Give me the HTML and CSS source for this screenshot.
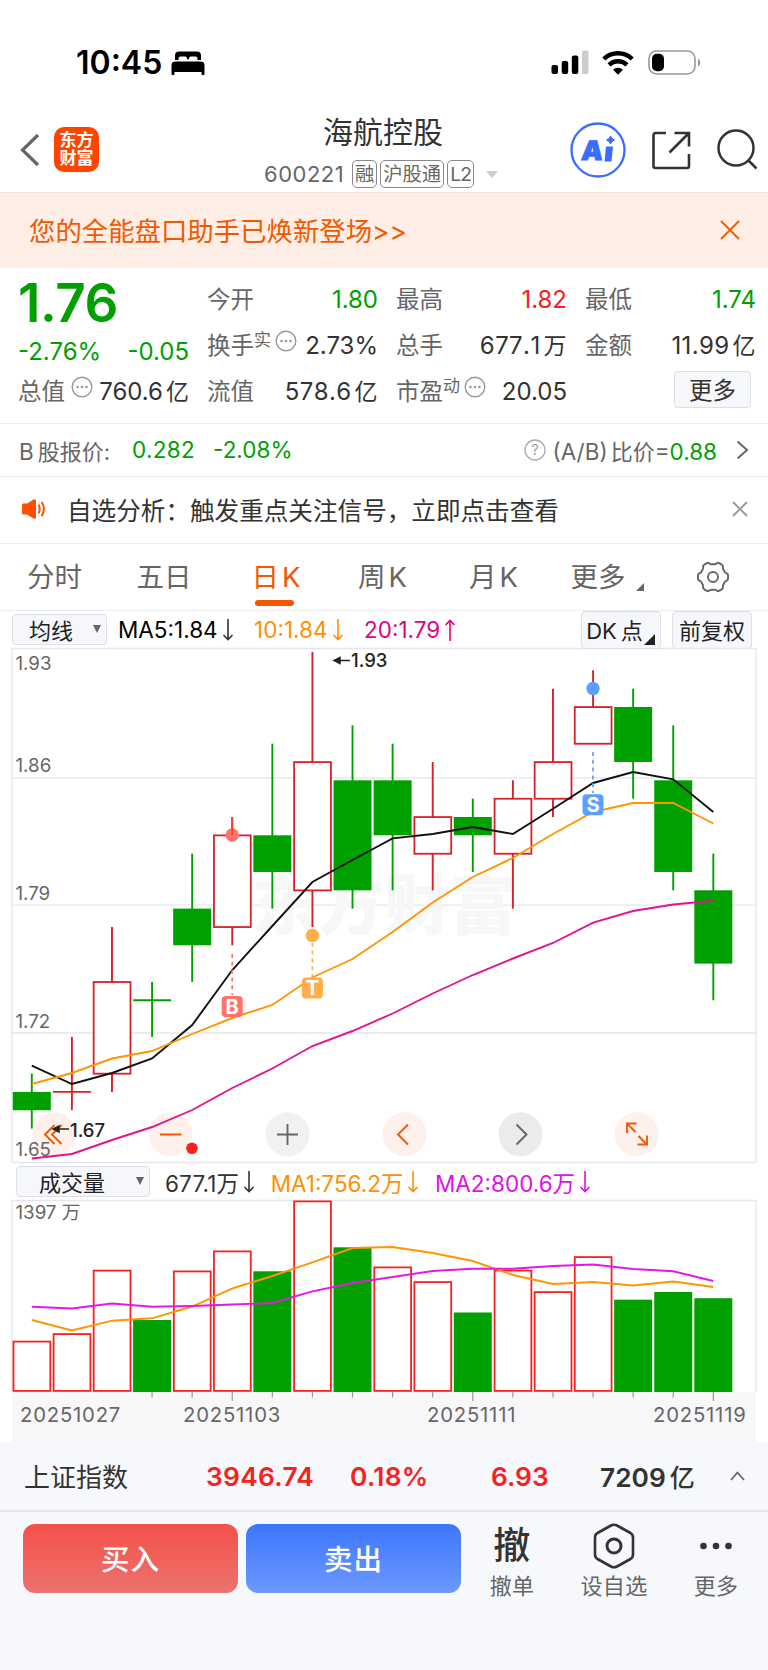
FILE: index.html
```html
<!DOCTYPE html>
<html lang="zh-CN">
<head>
    <meta charset="UTF-8">
    <meta name="viewport" content="width=device-width, initial-scale=1.0">
    <title>海航控股 600221</title>
    <link rel="stylesheet" href="styles.css">
</head>
<body>

    <div class="status">
        <span class="time">10:45</span>
        <svg class="bed" width="34" height="24" viewBox="0 0 34 24">
            <path d="M4 9V4.500a4 4 0 0 1 4-4H26a4 4 0 0 1 4 4V9H26.500V7.500a2 2 0 0 0-2-2H20a2 2 0 0 0-2 2L17 9l-1-1.500a2 2 0 0 0-2-2H9.500a2 2 0 0 0-2 2V9z"/>
            <path d="M0.500 23V14.500a4 4 0 0 1 4-4h25a4 4 0 0 1 4 4V23a1 1 0 0 1-1 1h-1a1 1 0 0 1-1-1V21H3.500V23a1 1 0 0 1-1 1h-1a1 1 0 0 1-1-1z"/>
        </svg>
        <div class="status-right">
            <svg width="38" height="25" viewBox="0 0 38 25">
                <rect x="0.500" y="15" width="6.500" height="9" rx="2"/>
                <rect x="10.700" y="11" width="6.500" height="13" rx="2"/>
                <rect x="20.800" y="5.500" width="6.500" height="18.500" rx="2"/>
                <rect x="31" y="0.500" width="6.500" height="23.500" rx="2" fill="#ccc"/>
            </svg>
            <svg class="wifi" width="32" height="24" viewBox="0 0 32 24">
                <path d="M1.800 8a20.500 20.500 0 0 1 28.400 0M7 13.900a13 13 0 0 1 18 0" fill="none" stroke="#000" stroke-width="4.400"/>
                <path d="M16 23.800l-5-5a7.300 7.300 0 0 1 10 0z"/>
            </svg>
            <svg width="53" height="25" viewBox="0 0 53 25">
                <rect x="1" y="1" width="46" height="23" rx="7.500" fill="none" stroke="#999" stroke-width="1.600"/>
                <rect x="4" y="3.800" width="12" height="17.500" rx="5"/>
                <path d="M50 8.500c3 1.500 3 6.500 0 8z" fill="#999"/>
            </svg>
        </div>
    </div>

    <div class="header">
        <div class="header-left">
            <svg width="20" height="34" viewBox="0 0 20 34"><path d="M18 2L2.500 17 18 32" fill="none" stroke="#666" stroke-width="3.200"/></svg>
            <div class="logo">东方<br>财富</div>
        </div>
        <div class="header-title">
            <h1>海航控股</h1>
            <div class="sub">
                <span class="code">600221</span>
                <span class="tag">融</span>
                <span class="tag">沪股通</span>
                <span class="tag tag-l2">L2</span>
                <span class="caret"></span>
            </div>
        </div>
        <div class="header-right">
            <svg width="56" height="56" viewBox="0 0 56 56">
                <circle cx="28" cy="28" r="26.500" fill="none" stroke="#3b6cff" stroke-width="2.300"/>
                <text x="14" y="38" class="ai" transform="skewX(-5)">A</text>
                <path d="M36 24.500h7l-1.500 15h-7z" fill="#3b6cff"/>
                <path d="M40.500 14q1 3 4 4-3 1-4 4-1-3-4-4 3-1 4-4z" fill="#3b6cff" stroke="#3b6cff"/>
            </svg>
            <svg class="share" width="40" height="40" viewBox="0 0 40 40" fill="none" stroke="#333" stroke-width="2.600">
                <path d="M15 3H4.500A2 2 0 0 0 2.500 5V36a2 2 0 0 0 2 2H36a2 2 0 0 0 2-2V24M23.500 3H38V16.500M38 3L18.500 22.500"/>
            </svg>
            <svg class="search" width="41" height="41" viewBox="0 0 41 41" fill="none" stroke="#333" stroke-width="2.500">
                <circle cx="19" cy="19" r="17.500"/><path d="M31 31l8.500 8.500"/>
            </svg>
        </div>
    </div>

    <div class="banner">
        <span>您的全能盘口助手已焕新登场&gt;&gt;</span>
        <svg width="20" height="20" viewBox="0 0 20 20"><path d="M1 1l18 18M19 1L1 19" stroke="#f35800" stroke-width="1.800"/></svg>
    </div>

    <div class="quote">
        <div class="col">
            <div class="price">1.76</div>
            <div class="cell change green"><span>-2.76%</span><span>-0.05</span></div>
            <div class="cell"><label>总值</label><svg class="dots up" width="22" height="22" viewBox="0 0 22 22"><use href="#more"/></svg><b>760.6<i>亿</i></b></div>
        </div>
        <div class="col">
            <div class="cell"><label>今开</label><b class="green">1.80</b></div>
            <div class="cell"><label>换手<sup>实</sup></label><svg class="dots" width="22" height="22" viewBox="0 0 22 22"><use href="#more"/></svg><b>2.73%</b></div>
            <div class="cell"><label>流值</label><b class="wide">578.6<i>亿</i></b></div>
        </div>
        <div class="col">
            <div class="cell"><label>最高</label><b class="red">1.82</b></div>
            <div class="cell"><label>总手</label><b class="wide">677.1<i>万</i></b></div>
            <div class="cell"><label>市盈<sup>动</sup></label><svg class="dots" width="22" height="22" viewBox="0 0 22 22"><use href="#more"/></svg><b>20.05</b></div>
        </div>
        <div class="col">
            <div class="cell"><label>最低</label><b class="green">1.74</b></div>
            <div class="cell"><label>金额</label><b class="wide">11.99<i>亿</i></b></div>
            <button class="more-btn">更多</button>
        </div>
    </div>

    <div class="bshare">
        <span>B<i>股报价:</i></span>
        <span class="green b-price">0.282</span>
        <span class="green b-pct">-2.08%</span>
        <div class="ratio">
            <svg width="22" height="22" viewBox="0 0 22 22"><circle cx="11" cy="11" r="10" fill="none" stroke="#aaa" stroke-width="1.300"/><text x="11" y="16" class="q">?</text></svg>
            <span>(A/B)<i>比价</i>=<em class="green">0.88</em></span>
            <svg class="arrow" width="13" height="20" viewBox="0 0 13 20"><path d="M1.500 1.500l9.500 8.500-9.500 8.500" fill="none" stroke="#666" stroke-width="2"/></svg>
        </div>
    </div>

    <div class="notice">
        <svg width="26" height="22" viewBox="0 0 26 22">
            <path d="M1 7Q1 5.500 2.500 5.500H6L12.500 1.500Q15 0.500 15 2.500V19.500Q15 21.500 12.500 20.500L6 16.500H2.500Q1 16.500 1 15z" fill="#ff5000"/>
            <path d="M17.500 6.500q2.500 4.500 0 9M20.500 4q5 7 0 14" fill="none" stroke="#ff5000" stroke-width="2"/>
        </svg>
        <span>自选分析：触发重点关注信号，立即点击查看</span>
        <svg class="close" width="16" height="16" viewBox="0 0 16 16"><path d="M1 1l14 14M15 1L1 15" stroke="#999" stroke-width="1.900"/></svg>
    </div>

    <div class="tabs">
        <span>分时</span>
        <span>五日</span>
        <span class="active">日<i>K</i></span>
        <span>周<i>K</i></span>
        <span>月<i>K</i></span>
        <span class="tab-more">更多</span>
        <svg width="32" height="32" viewBox="-16 -16 32 32" fill="none" stroke="#666" stroke-width="1.900" stroke-linejoin="round">
            <path d="M14.700 2.900L11.900 4.800 10.100 7.900 9.800 11.300Q8 13.500 4.900 14.200L1.800 12.700H-1.800L-4.900 14.200Q-8 13.500-9.800 11.300L-10.100 7.900-11.900 4.800-14.700 2.900Q-15.500 0-14.700-2.900L-11.900-4.800-10.100-7.900-9.800-11.300Q-8-13.500-4.900-14.200L-1.800-12.700H1.800L4.900-14.200Q8-13.500 9.800-11.300L10.100-7.900 11.900-4.800 14.700-2.900Q15.500 0 14.700 2.900z"/>
            <circle r="5"/>
        </svg>
    </div>

    <div class="ctrl">
        <div class="select">均线<span class="tri"></span></div>
        <span class="ma5">MA5:1.84</span><svg class="ar"><use href="#down"/></svg>
        <span class="ma10">10:1.84</span><svg class="ar ma10"><use href="#down"/></svg>
        <span class="ma20">20:1.79</span><svg class="ar ma20"><use href="#up"/></svg>
        <button class="dk">DK<i>点</i></button>
        <button class="fq">前复权</button>
    </div>

    <svg id="kline" class="chart" width="768" height="514" viewBox="0 0 768 514"></svg>

    <div class="ctrl vol-ctrl">
        <div class="select">成交量<span class="tri"></span></div>
        <span class="vol">677.1万</span><svg class="ar vol"><use href="#down"/></svg>
        <span class="ma10">MA1:756.2万</span><svg class="ar ma10"><use href="#down"/></svg>
        <span class="vma2">MA2:800.6万</span><svg class="ar vma2"><use href="#down"/></svg>
    </div>

    <svg id="volume" class="chart" width="768" height="242" viewBox="0 0 768 242"></svg>

    <div class="index">
        <span class="index-name">上证指数</span>
        <span class="red n1">3946.74</span>
        <span class="red n2">0.18%</span>
        <span class="red n3">6.93</span>
        <span class="n4">7209<i>亿</i></span>
        <svg width="15" height="10" viewBox="0 0 15 10"><path d="M1 9l6.500-7.500L14 9" fill="none" stroke="#666" stroke-width="1.800"/></svg>
    </div>

    <div class="footer">
        <button class="buy">买入</button>
        <button class="sell">卖出</button>
        <div class="act">
            <div class="ico che">撤</div>
            <span>撤单</span>
        </div>
        <div class="act">
            <div class="ico">
                <svg width="42" height="46" viewBox="0 0 42 46" fill="none" stroke="#333" stroke-width="2.600">
                    <path d="M18 2.500Q21 1 24 2.500L37.500 10Q40 11.500 40 14.500V31.500Q40 34.500 37.500 36L24 43.500Q21 45 18 43.500L4.500 36Q2 34.500 2 31.500V14.500Q2 11.500 4.500 10z"/>
                    <circle cx="21" cy="23" r="7" stroke-width="3"/>
                </svg>
            </div>
            <span>设自选</span>
        </div>
        <div class="act">
            <div class="ico">
                <svg width="34" height="8" viewBox="0 0 34 8" fill="#333"><circle cx="4.500" cy="4" r="3.300"/><circle cx="17" cy="4" r="3.300"/><circle cx="29.500" cy="4" r="3.300"/></svg>
            </div>
            <span>更多</span>
        </div>
    </div>

    <!-- shared symbols -->
    <svg class="defs" width="0" height="0">
        <symbol id="more" viewBox="0 0 22 22">
            <circle cx="11" cy="11" r="9.800" fill="none" stroke="#999" stroke-width="1.400"/>
            <circle cx="6.500" cy="11" r="1.300" fill="#999"/><circle cx="11" cy="11" r="1.300" fill="#999"/><circle cx="15.500" cy="11" r="1.300" fill="#999"/>
        </symbol>
        <symbol id="down" viewBox="0 0 12 22"><path d="M6 0V20.500M1.500 16L6 20.500 10.500 16" fill="none" stroke="currentColor" stroke-width="1.600"/></symbol>
        <symbol id="up" viewBox="0 0 12 22"><path d="M6 22V1.500M1.500 6L6 1.500 10.500 6" fill="none" stroke="currentColor" stroke-width="1.600"/></symbol>
    </svg>

    <script src="script.js"></script>
</body>
</html>
```
FILE: styles.css
```css
* {
    box-sizing: border-box;
}
body {
    margin: 0;
    width: 768px;
    height: 1670px;
    overflow: hidden;
    background: #fff;
    color: #333;
    font-family: Inter, "Noto Sans CJK SC", sans-serif;
    font-size: 24px;
}
i, em, b {
    font-style: normal;
    font-weight: inherit;
}
svg {
    display: block;
    flex: none;
}
span {
    white-space: nowrap;
}
button {
    font-family: inherit;
    color: inherit;
    padding: 0;
}
.green {
    color: #00a000;
}
.red {
    color: #f82020;
}
.defs {
    position: absolute;
}

/* status bar */
.status {
    height: 108px;
    padding: 17px 67px 0 76px;
    display: flex;
    align-items: center;
    color: #000;
}
.time {
    font-size: 32px;
    font-weight: 600;
    width: 95px;
}
.status-right {
    margin-left: auto;
    display: flex;
    align-items: center;
}
.wifi {
    margin: 0 14px 0 13px;
}

/* header */
.header {
    height: 84px;
    display: grid;
    grid-template-columns: 264px 240px 264px;
}
.header-left {
    display: flex;
    align-items: center;
    padding-left: 20px;
}
.logo {
    width: 45px;
    height: 45px;
    margin: -2px 0 0 14px;
    padding-top: 4px;
    border-radius: 10px;
    background: #ff4400;
    color: #fff;
    font-size: 17px;
    font-weight: 700;
    line-height: 18.500px;
    text-align: center;
}
h1 {
    margin: 7px 0 0;
    padding-right: 2px;
    font-size: 30px;
    font-weight: 400;
    line-height: 34px;
    text-align: center;
}
.sub {
    display: flex;
    align-items: center;
    height: 28px;
    margin-top: 11px;
    color: #666;
}
.code {
    width: 88px;
    font-size: 22px;
    letter-spacing: 0.500px;
}
.tag {
    height: 28px;
    margin-right: 3px;
    padding: 0 2px;
    border: 1px solid #888;
    border-radius: 5px;
    font-size: 19.300px;
    line-height: 26px;
}
.tag-l2 {
    letter-spacing: -0.800px;
}
.caret {
    margin-left: 9px;
    border: 6.500px solid transparent;
    border-top: 7px solid #ccc;
    border-bottom: 0;
}
.header-right {
    display: flex;
    align-items: center;
    padding-left: 66px;
}
.header-right svg {
    margin-top: -1px;
}
.ai {
    font-size: 27px;
    font-weight: 900;
    fill: #3b6cff;
    stroke: #3b6cff;
    stroke-width: 1px;
}
.header-right .share {
    margin-left: 25px;
}
.header-right .search {
    margin-left: 26px;
}

/* banner */
.banner {
    height: 76px;
    padding: 0 28px 2px 29px;
    display: flex;
    align-items: center;
    justify-content: space-between;
    border-top: 1px solid #ebe6e4;
    background: #feeee6;
    color: #f35800;
    font-size: 26.400px;
}

/* quote */
.quote {
    height: 156px;
    padding: 9px 12px 0 18px;
    display: grid;
    grid-template-columns: repeat(4, 171px);
    column-gap: 18px;
    border-bottom: 1px solid #eee;
}
.price {
    height: 52px;
    line-height: 53px;
    font-size: 53px;
    font-weight: 600;
    letter-spacing: -0.500px;
    color: #00a000;
}
.cell {
    height: 46px;
    line-height: 46px;
    display: flex;
    justify-content: space-between;
    position: relative;
}
.cell.change {
    height: 40px;
}
.cell label {
    color: #666;
    font-size: 23.500px;
    width: 49px;
    white-space: nowrap;
}
.cell sup {
    font-size: 17px;
    line-height: 0;
    vertical-align: 8px;
}
.cell i {
    margin-left: 3px;
    font-size: 23px;
}
.wide {
    font-kerning: none;
    letter-spacing: 0.400px;
}
.dots {
    position: absolute;
    left: 68px;
    top: 7px;
}
.dots.up {
    left: 53px;
}
.more-btn {
    display: block;
    width: 77px;
    height: 37px;
    margin: 2px 0 0 89px;
    padding-bottom: 2px;
    border: 1px solid #dcdfe8;
    border-radius: 4px;
    background: #f6f7fa;
    font-size: 23.500px;
}

/* B share */
.bshare {
    height: 53px;
    padding: 0 19px 1px;
    display: flex;
    align-items: center;
    border-bottom: 1px solid #eee;
    color: #666;
    font-size: 22.500px;
}
.bshare i {
    margin-left: 4px;
    font-size: 22px;
}
.b-price {
    margin-left: 22px;
    letter-spacing: 0.300px;
}
.b-pct {
    margin-left: 18px;
}
.ratio {
    margin-left: auto;
    display: flex;
    align-items: center;
    gap: 6px;
}
.ratio i {
    margin-left: 3px;
}
.arrow {
    margin-left: 13px;
}
.q {
    font-size: 14px;
    fill: #999;
    text-anchor: middle;
}

/* notice */
.notice {
    height: 67px;
    padding: 0 20px 2px 21px;
    display: flex;
    align-items: center;
    border-bottom: 1px solid #eee;
    font-size: 24.600px;
}
.notice span {
    margin-left: 20px;
}
.close {
    margin-left: auto;
}

/* tabs */
.tabs {
    height: 67px;
    padding: 0 39px 0 27px;
    display: grid;
    grid-template-columns: 109.500px 115px 106.500px 111px 101.500px 1fr;
    grid-auto-flow: column;
    align-items: center;
    border-bottom: 1px solid #eee;
    color: #666;
    font-size: 27.500px;
}
.tabs span {
    line-height: 66px;
    position: relative;
}
.tabs i {
    margin-left: 3px;
}
.tabs .active {
    color: #f35800;
}
.active::after {
    content: "";
    position: absolute;
    left: 3.500px;
    bottom: 4.500px;
    width: 38.500px;
    height: 6px;
    border-radius: 3px;
    background: #f35800;
}
.tab-more::after {
    content: "";
    position: absolute;
    left: 65px;
    bottom: 19px;
    border-left: 8px solid transparent;
    border-bottom: 8px solid #666;
}

/* indicator rows */
.ctrl {
    height: 37px;
    padding-left: 12px;
    display: flex;
    align-items: center;
    font-size: 22.500px;
}
.select {
    width: 95px;
    height: 31px;
    margin-right: 11px;
    padding: 0 5px 2px 16px;
    display: flex;
    align-items: center;
    justify-content: space-between;
    border: 1px solid #dcdfe8;
    border-radius: 4px;
    background: #f6f7fa;
    color: #222;
    font-size: 22px;
}
.tri {
    border: 4.500px solid transparent;
    border-top: 8px solid #666;
    border-bottom: 0;
}
.ar {
    width: 12px;
    height: 22px;
    margin-left: 4px;
}
.ma5 {
    color: #000;
}
.ma10 {
    color: #ff9000;
}
.ma20 {
    color: #e4007f;
}
.vma2 {
    color: #e010e8;
}
span.ma10, span.ma20 {
    margin-left: 20.500px;
}
.dk, .fq {
    height: 38px;
    padding-bottom: 2px;
    border: 1px solid #dcdfe8;
    border-radius: 4px;
    background: #f6f7fa;
    color: #222;
    font-size: 22px;
}
.dk {
    position: relative;
    width: 80px;
    margin-left: auto;
    padding-right: 13px;
}
.dk i {
    margin-left: 4px;
}
.dk::after {
    content: "";
    position: absolute;
    right: 5px;
    bottom: 3px;
    border-left: 11px solid transparent;
    border-bottom: 11px solid #222;
}
.fq {
    width: 80px;
    margin: 0 16px 0 11px;
}
.vol-ctrl {
    height: 38px;
    padding: 1px 0 0 16px;
}
.vol-ctrl .select {
    width: 134px;
    margin-right: 15px;
    padding: 0 5px 2px 22px;
}
.vol-ctrl span.ma10, .vol-ctrl span.vma2 {
    margin-left: 15.500px;
}
.vol {
    letter-spacing: 0.150px;
}

/* charts */
.chart {
    overflow: visible;
}
.chart .grid {
    fill: none;
    stroke: #e4e6ec;
    stroke-width: 1.300;
}
.chart .line {
    fill: none;
    stroke-width: 1.900;
}
.chart .axis {
    font-size: 18.700px;
    fill: #666;
}
.chart .date {
    font-size: 20.300px;
    font-kerning: none;
    letter-spacing: 0.800px;
    fill: #666;
}
.chart .mark {
    font-size: 18.500px;
    font-weight: 500;
    fill: #222;
}
.chart .badge {
    font-size: 20px;
    font-weight: 700;
    fill: #fff;
    text-anchor: middle;
}
.chart .watermark {
    font-size: 66px;
    font-weight: 900;
    fill: #f7f7f7;
}

/* index */
.index {
    height: 70px;
    padding: 0 23px 0 24px;
    display: flex;
    align-items: center;
    border-bottom: 2px solid #e4e6e8;
    background: #f7f8fb;
    font-size: 26.300px;
    font-weight: 600;
}
.index-name {
    width: 182px;
    padding-bottom: 2px;
    font-size: 26px;
    font-weight: 400;
}
.n1 {
    width: 144px;
    letter-spacing: 0.300px;
}
.n2 {
    width: 141px;
    letter-spacing: 0.300px;
}
.n3 {
    width: 109px;
}
.n4 i {
    margin-left: 4px;
    font-size: 25px;
    font-weight: 500;
}
.index svg {
    margin-left: auto;
}

/* footer */
.footer {
    height: 158px;
    padding: 12px 0 0 23px;
    display: flex;
    align-items: flex-start;
    background: #f7f8fb;
}
.buy, .sell {
    width: 215px;
    height: 69px;
    margin-right: 8px;
    padding-bottom: 3px;
    border: 0;
    border-radius: 12px;
    color: #fff;
    font-size: 28.500px;
    font-weight: 500;
    letter-spacing: 1px;
}
.buy {
    background: linear-gradient(#f4504a, #ec736e);
}
.sell {
    margin-right: 0;
    background: linear-gradient(#3b76fb, #6d99ff);
}
.act {
    width: 102px;
    display: flex;
    flex-direction: column;
    align-items: center;
    color: #666;
    font-size: 22px;
    letter-spacing: 0.300px;
    line-height: 36px;
}
.ico {
    height: 44px;
    display: flex;
    align-items: center;
}
.che {
    color: #333;
    font-size: 37px;
    font-weight: 500;
}
```
FILE: script.js
```javascript
// open, close, high, low
const days = [
    [1.69, 1.68, 1.70, 1.67],
    [1.69, 1.69, 1.72, 1.68],
    [1.70, 1.75, 1.78, 1.69],
    [1.74, 1.74, 1.75, 1.72],
    [1.79, 1.77, 1.82, 1.75],
    [1.78, 1.83, 1.84, 1.77],
    [1.83, 1.81, 1.88, 1.79],
    [1.80, 1.87, 1.93, 1.78],
    [1.86, 1.80, 1.89, 1.79],
    [1.86, 1.83, 1.88, 1.80],
    [1.82, 1.84, 1.87, 1.80],
    [1.84, 1.83, 1.85, 1.81],
    [1.82, 1.85, 1.86, 1.79],
    [1.85, 1.87, 1.91, 1.84],
    [1.88, 1.90, 1.92, 1.88],
    [1.90, 1.87, 1.91, 1.85],
    [1.86, 1.81, 1.89, 1.80],
    [1.80, 1.76, 1.82, 1.74]
];
const up = [0, 1, 1, 0, 0, 1, 0, 1, 0, 0, 1, 0, 1, 1, 1, 0, 0, 0];
const volUp = [1, 1, 1, 0, 1, 1, 0, 1, 0, 1, 1, 0, 1, 1, 1, 0, 0, 0];
const GREEN = '#00a000';

const cx = i => 31.8 + i * 40.09;
const py = p => 4 + (1.93 - p) * 1833;

function polyline(ys, color) {
    const pts = ys.map((y, i) => cx(i).toFixed(1) + ',' + y).join(' ');
    return `<polyline class="line" points="${pts}" stroke="${color}"/>`;
}

function box(x, top, bottom, red, color) {
    if (red) {
        return `<rect x="${x - 18.3}" y="${top + 0.1}" width="36.800" height="${bottom - top}" fill="#fff" stroke="${color}" stroke-width="1.800"/>`;
    }
    return `<rect x="${x - 19}" y="${top}" width="38" height="${bottom - top}" fill="${GREEN}"/>`;
}

function drawKline() {
    let s = '<path class="grid" d="M12 0.500H756M12 129.900H756M12 257.200H756M12 385H756M12 514.500H756M12 0V515M756 0V515"/>';
    s += '<text class="watermark" x="252" y="281">东方财富</text>';

    // round buttons
    const btns = [[54.5, '#fef0ea'], [170.5, '#fef0ea'], [287.5, '#f1f1f1'], [404.5, '#fef0ea'], [520.5, '#ebebeb'], [636.5, '#fef0ea']];
    btns.forEach(b => s += `<circle cx="${b[0]}" cy="486.300" r="22" fill="${b[1]}"/>`);
    s += `<g fill="none" stroke="#f35800" stroke-width="1.900">
        <path d="M54.500 477l-9.500 9.500 9.500 9.500M61.500 477l-9.500 9.500 9.500 9.500M160 486.500h21.500M408 476.500l-10 10 10 10"/>
        <path d="M627 485V475.500h9.500M627 475.500l8.500 8.500M647 487.500V496.500h-9.500M647 496.500l-8.500-8.500"/></g>
        <path d="M277 486.500h21M287.500 476v21M516.500 476.500l10 10-10 10" fill="none" stroke="#666" stroke-width="1.900"/>`;

    days.forEach((d, i) => {
        const x = cx(i), color = up[i] ? '#d82028' : GREEN;
        const top = py(Math.max(d[0], d[1])), bottom = py(Math.min(d[0], d[1]));
        s += `<path d="M${x} ${py(d[2])}V${py(d[3])}" stroke="${color}" stroke-width="1.900"/>`;
        if (d[0] === d[1]) {
            s += `<path d="M${x - 19} ${top}h38" stroke="${color}" stroke-width="1.900"/>`;
        } else {
            s += box(x, top, bottom, up[i], color);
        }
    });

    [['1.93', 22], ['1.86', 123.5], ['1.79', 251.5], ['1.72', 380], ['1.65', 508]].forEach(t =>
        s += `<text class="axis" x="15.500" y="${t[1]}">${t[0]}</text>`);

    s += polyline([417.7, 436, 425, 410.5, 377, 322, 278, 234, 212, 190.3, 186, 179, 186, 160.7, 135, 124, 131.3, 164], '#111');
    s += polyline([436, 425, 410.5, 403, 386, 370, 357, 329.5, 311, 284, 254.5, 229, 210, 186, 164, 155, 155, 175.5], '#ff9500');
    s += polyline([510.5, 506, 492, 479, 462, 440, 420.5, 398, 383, 365.5, 345.5, 327, 310.5, 295, 274.7, 263, 256.5, 252.7], '#e4148a');

    // buy / sell marks
    [[232.2, 187, 306, 347, 358.5, '#ff7468', 'B'], [312.4, 287.5, 287, 329, 340, '#ffae4a', 'T'], [593, 40.5, 104, 145, 156.8, '#5b9fff', 'S']].forEach(m => {
        s += `<circle cx="${m[0]}" cy="${m[1]}" r="6.700" fill="${m[5]}"/>
            <path d="M${m[0]} ${m[2]}V${m[3]}" stroke="${m[5]}" stroke-width="1.700" stroke-dasharray="4 3.800"/>
            <rect x="${m[0] - 10.5}" y="${m[4] - 10.5}" width="21" height="21" rx="4" fill="${m[5]}"/>
            <text class="badge" x="${m[0]}" y="${m[4] + 7.3}">${m[6]}</text>`;
    });
    s += '<path d="M232.200 169V187" stroke="#f04030" stroke-width="1.700"/>';

    s += `<g stroke="#222" stroke-width="1.500" fill="#222">
        <path d="M336 12.500h14M340 9.500v6l-6-3zM56 481h13M59 478v6l-6-3z"/></g>
        <text class="mark" x="351" y="19.300">1.93</text>
        <text class="mark" x="70" y="489">1.67</text>
        <circle cx="192" cy="500.300" r="5.800" fill="#f82020"/>`;
    document.getElementById('kline').innerHTML = s;
}

function drawVolume() {
    const tops = [141.5, 134, 70.5, 120, 71.3, 51.3, 71.3, 1.3, 47.3, 67.3, 82, 112.5, 70.5, 92, 57, 99.7, 92, 98.2];
    let s = '<rect x="12" y="192" width="744" height="50" fill="#f7f7fa"/>';
    s += '<path class="grid" d="M12 192V0.500H756V192"/>';
    tops.forEach((t, i) => {
        s += volUp[i] ? box(cx(i), t, 190.8, true, '#f82020') : box(cx(i), t, 192, false);
        if (i > 2) {
            s += `<path d="M${cx(i)} 192v${i % 6 === 5 ? 9 : 5.5}" stroke="#999" stroke-width="1.200"/>`;
        }
    });
    s += polyline([120, 130.5, 120.7, 118.3, 106.5, 88.5, 76, 62.3, 48, 47, 53, 61, 75, 84, 82, 85.5, 81.5, 87], '#ff9500');
    s += polyline([106.7, 108.5, 103.5, 106.7, 106, 104.5, 103, 91.3, 83, 77, 71, 68.7, 68.7, 66, 64.5, 69, 71.3, 81], '#e418e4');
    s += '<text class="axis" x="15.500" y="19">1397 万</text>';
    [['20251027', 20], ['20251103', 183], ['20251111', 427], ['20251119', 653]].forEach(t =>
        s += `<text class="date" x="${t[1]}" y="222">${t[0]}</text>`);
    document.getElementById('volume').innerHTML = s;
}

drawKline();
drawVolume();
```
